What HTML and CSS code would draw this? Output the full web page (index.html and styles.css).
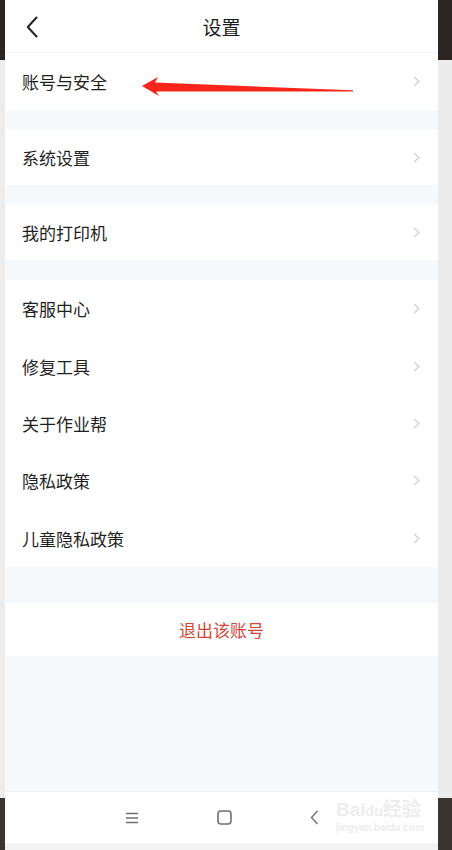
FILE: index.html
```html
<!DOCTYPE html>
<html lang="zh-CN">
<head>
  <meta charset="UTF-8" />
  <meta name="viewport" content="width=device-width, initial-scale=1.0" />
  <title>设置</title>
  <link rel="stylesheet" href="styles.css">
</head>
<body>
  <div class="tela">
    <header class="topo">
      <svg class="voltar" width="12" height="22" viewBox="0 0 12 22">
        <path d="M10.5 1.5 L1.8 11 L10.5 20.5" fill="none" stroke="#222" stroke-width="2" stroke-linecap="round" stroke-linejoin="round"/>
      </svg>
      <h1>设置</h1>
    </header>

    <div class="grupo">
      <div class="item alto">
        <span>账号与安全</span>
        <i class="seta"></i>
        <svg class="anotacao" width="216" height="24" viewBox="140 75 216 24">
          <polygon points="142,86 158,77 155,82.5 353,90.3 353,91.6 156,91.5 159,96" fill="#f8261a"/>
        </svg>
      </div>
    </div>

    <div class="grupo">
      <div class="item"><span>系统设置</span><i class="seta"></i></div>
    </div>

    <div class="grupo">
      <div class="item"><span>我的打印机</span><i class="seta"></i></div>
    </div>

    <div class="grupo ultimo">
      <div class="item lista"><span>客服中心</span><i class="seta"></i></div>
      <div class="item lista"><span>修复工具</span><i class="seta"></i></div>
      <div class="item lista"><span>关于作业帮</span><i class="seta"></i></div>
      <div class="item lista"><span>隐私政策</span><i class="seta"></i></div>
      <div class="item lista"><span>儿童隐私政策</span><i class="seta"></i></div>
    </div>

    <div class="grupo sair">
      <div class="item centro"><span>退出该账号</span></div>
    </div>

    <div class="vazio"></div>

    <nav class="navegacao">
      <svg width="14" height="12" viewBox="0 0 14 12">
        <path d="M1 1.5 H13 M1 6 H13 M1 10.5 H13" stroke="#707070" stroke-width="1.3"/>
      </svg>
      <svg width="15" height="15" viewBox="0 0 15 15">
        <rect x="1" y="1" width="13" height="13" rx="3" fill="none" stroke="#707070" stroke-width="1.6"/>
      </svg>
      <svg width="9" height="15" viewBox="0 0 9 15">
        <path d="M7.5 1 L1.5 7.5 L7.5 14" fill="none" stroke="#707070" stroke-width="1.4"/>
      </svg>
      <div class="marca">
        <div class="marca-nome">Bai<b>du</b>经验</div>
        <div class="marca-url">jingyan.baidu.com</div>
      </div>
    </nav>
    <div class="rodape"></div>
  </div>
</body>
</html>
```

FILE: styles.css
```css
* {
  box-sizing: border-box;
  margin: 0;
  padding: 0;
}
body {
  width: 452px;
  height: 850px;
  overflow: hidden;
  font-family: "Noto Sans CJK SC", "Noto Sans", sans-serif;
  color: #1f1f1f;
  background: linear-gradient(to bottom, #2a2422 0, #2a2422 60px, #ececec 60px, #ececec 798px, #3b3531 798px);
}
.tela {
  width: 433px;
  height: 850px;
  margin-left: 5px;
  display: flex;
  flex-direction: column;
  background: #f6f9fc;
  position: relative;
}
.topo {
  height: 53px;
  background: #fff;
  border-bottom: 1px solid #f1f2f4;
  display: flex;
  align-items: center;
  justify-content: center;
  position: relative;
}
.topo h1 {
  font-size: 19px;
  font-weight: 400;
  color: #1a1a1a;
  margin-top: 1px;
}
.voltar {
  position: absolute;
  left: 21px;
  top: 16px;
}
.grupo {
  background: #fff;
  margin-bottom: 20px;
}
.grupo.ultimo {
  margin-bottom: 36px;
}
.item {
  height: 55px;
  padding: 0 17px;
  display: flex;
  align-items: center;
  justify-content: space-between;
  font-size: 17px;
  position: relative;
}
.item.alto {
  height: 57px;
}
.item.lista {
  height: 57.4px;
}
.seta {
  width: 7px;
  height: 7px;
  border-top: 1.2px solid #c6c6c6;
  border-right: 1.2px solid #c6c6c6;
  transform: rotate(45deg);
  margin-right: 3px;
}
.anotacao {
  position: absolute;
  left: 135px;
  top: 22px;
}
.sair {
  margin-bottom: 0;
}
.sair .item {
  height: 53px;
}
.centro {
  justify-content: center;
  color: #d2463a;
}
.vazio {
  flex: 1;
}
.navegacao {
  height: 52px;
  background: #fff;
  display: flex;
  align-items: center;
  gap: 78px;
  padding-left: 120px;
  position: relative;
  border-top: 1px solid #eef1f5;
}
.marca {
  position: absolute;
  left: 331px;
  top: 8px;
  color: #ededed;
  line-height: 1;
}
.marca-nome {
  font-family: "Liberation Sans", "Noto Sans CJK SC", sans-serif;
  font-size: 19px;
  font-weight: 700;
}
.marca-nome b {
  font-size: 14px;
}
.marca-url {
  font-family: "Liberation Sans", sans-serif;
  font-size: 10px;
  font-weight: 700;
  margin-top: 4px;
}
.rodape {
  height: 7px;
  background: #f3f3f3;
}
```
